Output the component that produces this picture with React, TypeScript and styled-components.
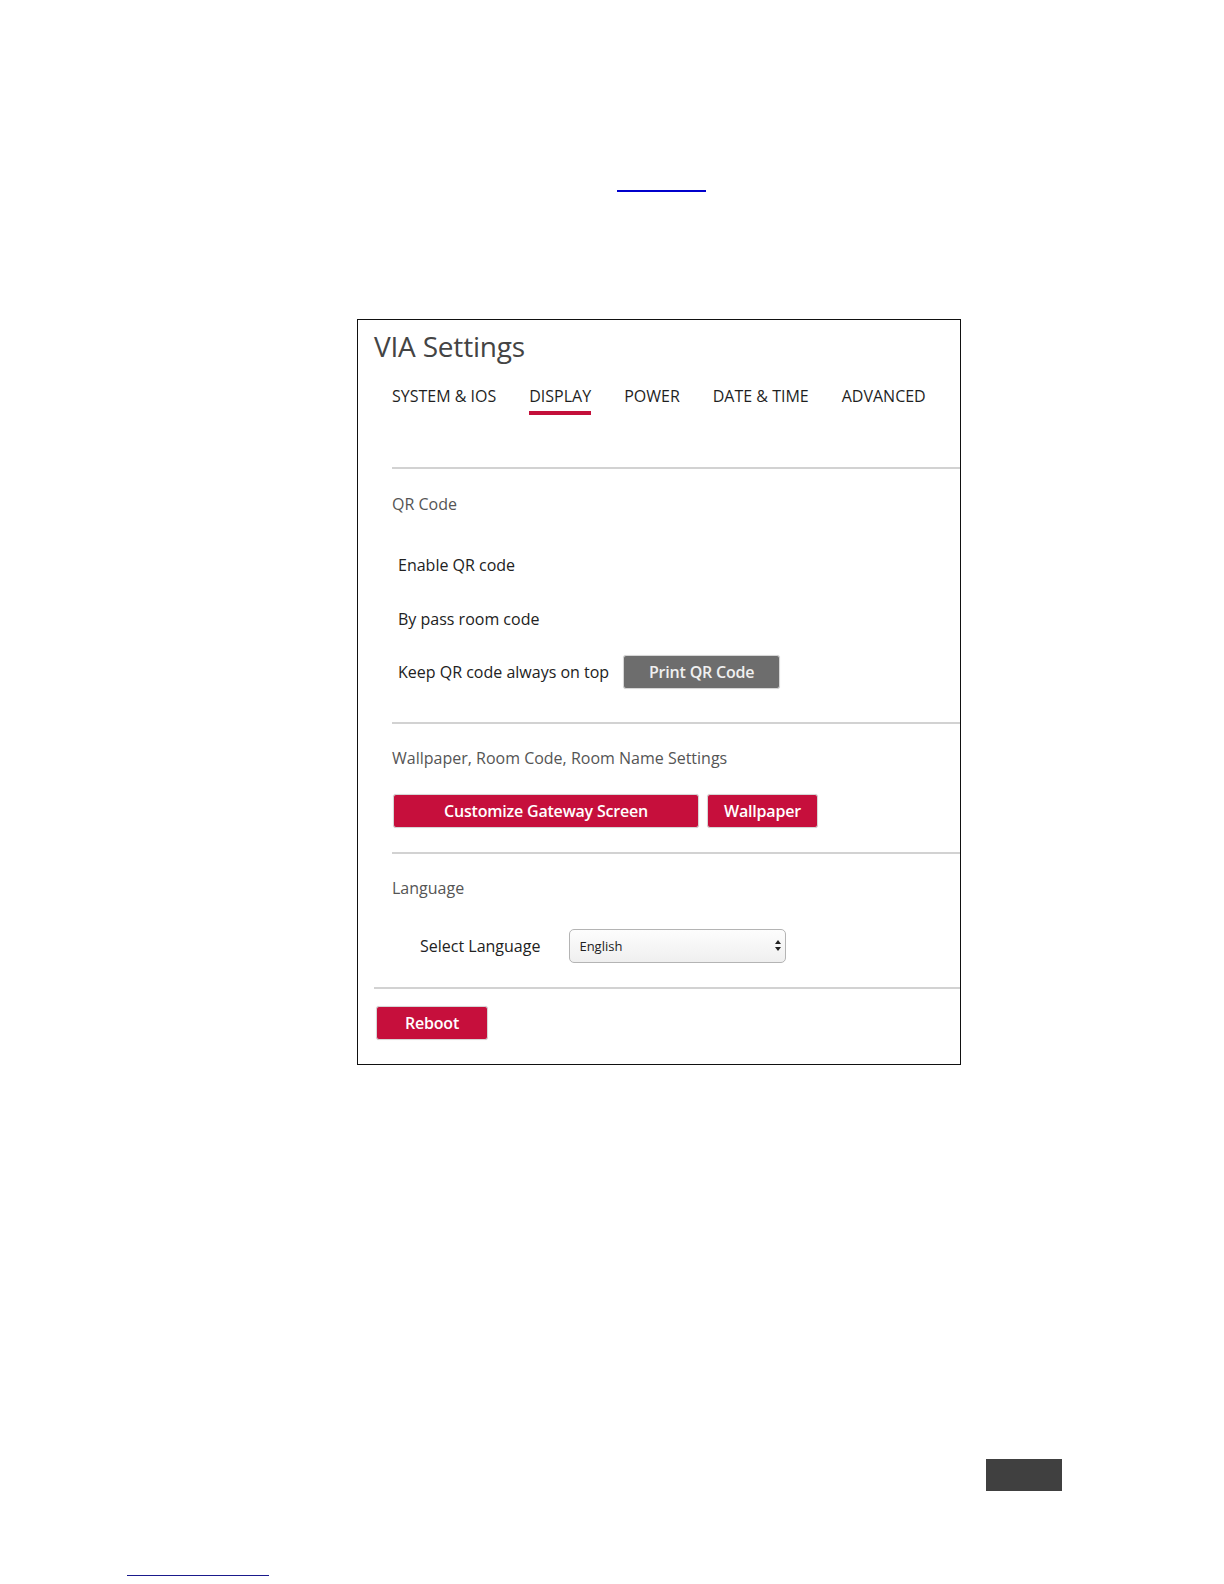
import styled, { createGlobalStyle } from 'styled-components';

const GlobalStyle = createGlobalStyle`
  html, body {
    margin: 0;
    padding: 0;
    background: #ffffff;
  }
  body {
    font-family: 'Open Sans', 'Liberation Sans', sans-serif;
    color: #222222;
  }
  * {
    box-sizing: border-box;
  }
`;

const Page = styled.div`
  width: 1224px;
  min-height: 1584px;
  display: flex;
  flex-direction: column;
  align-items: flex-start;
`;

const TopLink = styled.a`
  display: block;
  margin: 190px 0 0 617px;
  width: 89px;
  height: 2px;
  background: #0000cc;
`;

const Panel = styled.div`
  margin: 127px 0 0 357px;
  width: 604px;
  height: 746px;
  border: 1px solid #111111;
  padding: 9px 0 0 16px;
  display: flex;
  flex-direction: column;
`;

const Title = styled.h1`
  margin: 0;
  font-size: 28px;
  line-height: 34px;
  font-weight: 400;
  color: #444444;
  letter-spacing: -0.2px;
`;

const Tabs = styled.nav`
  display: flex;
  gap: 33px;
  margin: 23px 0 0 18px;
`;

const Tab = styled.div<{ $active?: boolean }>`
  display: flex;
  flex-direction: column;
  font-size: 16px;
  line-height: 20px;
  color: #1f1f1f;
  &::after {
    content: '';
    margin-top: 5px;
    height: 4px;
    background: ${(p) => (p.$active ? '#c4103a' : 'transparent')};
  }
`;

const Content = styled.div`
  margin: 52px 0 0 18px;
  display: flex;
  flex-direction: column;
`;

const Section = styled.section<{ $pad?: number }>`
  border-top: 2px solid #d2d2d2;
  padding-bottom: ${(p) => p.$pad ?? 0}px;
  display: flex;
  flex-direction: column;
`;

const Heading = styled.div<{ $top?: number }>`
  font-size: 16px;
  line-height: 20px;
  color: #555555;
  margin-top: ${(p) => p.$top ?? 25}px;
`;

const Row = styled.div<{ $top: number; $indent: number; $gap?: number }>`
  display: flex;
  align-items: center;
  gap: ${(p) => p.$gap ?? 0}px;
  margin-top: ${(p) => p.$top}px;
  padding-left: ${(p) => p.$indent}px;
  font-size: 16px;
  line-height: 20px;
  color: #222222;
`;

const Button = styled.button<{ $w: number; $tone?: 'red' | 'gray' }>`
  width: ${(p) => p.$w}px;
  height: 34px;
  border: 1px solid #d6d6d6;
  border-radius: 3px;
  background: ${(p) => (p.$tone === 'gray' ? '#6d6d6d' : '#c60f3c')};
  color: ${(p) => (p.$tone === 'gray' ? '#f0f0f0' : '#ffffff')};
  font-family: 'Open Sans', 'Liberation Sans', sans-serif;
  font-size: 16px;
  font-weight: 600;
  letter-spacing: -0.2px;
  padding: 0;
  cursor: pointer;
  box-shadow: 0 0 1px rgba(0, 0, 0, 0.15);
`;

const SelectWrap = styled.div`
  position: relative;
  width: 217px;
  height: 34px;
`;

const Select = styled.select`
  appearance: none;
  width: 100%;
  height: 100%;
  border: 1px solid #b4b4b4;
  border-radius: 5px;
  background: linear-gradient(#fdfdfd, #efefef);
  font-family: 'Open Sans', 'Liberation Sans', sans-serif;
  font-size: 13px;
  color: #222222;
  padding: 0 0 0 9px;
`;

const Arrows = styled.svg`
  position: absolute;
  right: 5px;
  top: 11px;
  pointer-events: none;
`;

const FooterSection = styled.div`
  margin-top: 24px;
  border-top: 2px solid #d2d2d2;
  padding: 17px 0 0 2px;
`;

const PageNumberBox = styled.div`
  margin: 394px 0 0 986px;
  width: 76px;
  height: 32px;
  background: #404040;
`;

const BottomRule = styled.div`
  margin: 84px 0 0 127px;
  width: 142px;
  height: 1px;
  background: #1a1a8c;
`;

const tabs = ['SYSTEM & IOS', 'DISPLAY', 'POWER', 'DATE & TIME', 'ADVANCED'];

export default function App() {
  return (
    <>
      <GlobalStyle />
      <Page>
        <TopLink href="#" aria-label="link" />
        <Panel>
          <Title>VIA Settings</Title>
          <Tabs>
            {tabs.map((t) => (
              <Tab key={t} $active={t === 'DISPLAY'}>
                {t}
              </Tab>
            ))}
          </Tabs>
          <Content>
            <Section $pad={33}>
              <Heading>QR Code</Heading>
              <Row $top={41} $indent={6}>Enable QR code</Row>
              <Row $top={34} $indent={6}>By pass room code</Row>
              <Row $top={26} $indent={6} $gap={14}>
                Keep QR code always on top
                <Button $w={157} $tone="gray">Print QR Code</Button>
              </Row>
            </Section>
            <Section $pad={24}>
              <Heading $top={24}>Wallpaper, Room Code, Room Name Settings</Heading>
              <Row $top={26} $indent={1} $gap={8}>
                <Button $w={306}>Customize Gateway Screen</Button>
                <Button $w={111}>Wallpaper</Button>
              </Row>
            </Section>
            <Section>
              <Heading $top={24}>Language</Heading>
              <Row $top={31} $indent={28} $gap={29}>
                Select Language
                <SelectWrap>
                  <Select defaultValue="English">
                    <option>English</option>
                  </Select>
                  <Arrows width="6" height="11" viewBox="0 0 6 11">
                    <path d="M3 0 L6 4 L0 4 Z M3 11 L6 7 L0 7 Z" fill="#222" />
                  </Arrows>
                </SelectWrap>
              </Row>
            </Section>
          </Content>
          <FooterSection>
            <Button $w={112}>Reboot</Button>
          </FooterSection>
        </Panel>
        <PageNumberBox />
        <BottomRule />
      </Page>
    </>
  );
}
